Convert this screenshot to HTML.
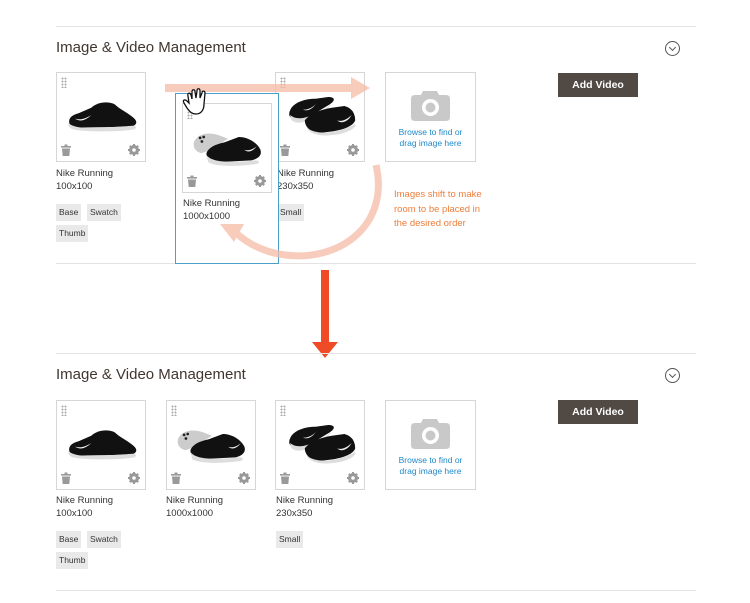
<!DOCTYPE html>
<html><head><meta charset="utf-8"><style>
*{margin:0;padding:0;box-sizing:border-box}
body{width:750px;height:603px;background:#fff;position:relative;overflow:hidden;font-family:"Liberation Sans",sans-serif;color:#333}
.a{position:absolute}
.hr{position:absolute;left:56px;width:640px;height:1px;background:#e3e3e3}
.title{position:absolute;left:56px;font-size:15px;color:#41362f}
.chev{position:absolute;left:665px;width:15px;height:15px;border:1px solid #555;border-radius:50%}
.chev:after{content:"";position:absolute;left:4px;top:2.5px;width:4px;height:4px;border-right:1px solid #555;border-bottom:1px solid #555;transform:rotate(45deg)}
.card{position:absolute;width:90px;height:90px;border:1px solid #d6d6d6;background:#fff}
.card svg.shoe{position:absolute;left:9px;top:20px}
.dots{position:absolute;left:4px;top:4px;width:6px;height:11px;background:radial-gradient(circle,#aaa 0.9px,transparent 1.1px) 0 0/3px 3px}
.trash{position:absolute;left:4px;bottom:5px}
.gear{position:absolute;right:5px;bottom:5px}
.lbl{position:absolute;font-size:9.5px;line-height:13px;color:#333}
.tag{position:absolute;height:17px;background:#e9e9e9;font-size:8.5px;line-height:17px;padding:0 3px;color:#333}
.btn{position:absolute;left:558px;width:80px;height:24px;background:#514943;color:#fff;font-size:10.5px;font-weight:bold;text-align:center;line-height:24px}
.up{position:absolute;width:91px;height:90px;border:1px solid #d6d6d6}
.up .t{position:absolute;top:54px;width:100%;text-align:center;font-size:8.5px;line-height:10.5px;color:#1f87c9}
</style></head><body>
<svg width="0" height="0" style="position:absolute">
<defs>
<g id="s1"><path d="M4 34 C2 28 6 24 14 22 L28 16 C34 10 46 8 54 12 C60 18 70 22 76 28 C80 32 78 36 72 37 L12 38 C8 38 5 37 4 34Z" fill="#111"/><path d="M3 33 C8 38 20 39 40 38 L74 36 C78 36 79 38 76 40 C60 43 20 43 8 40 C4 39 2 36 3 33Z" fill="#ddd"/><path d="M10 28 C16 30 22 28 28 24 C22 30 16 32 10 28Z" fill="#eee"/></g>
<g id="s2"><path d="M2 20 C6 10 18 8 30 12 L40 16 C30 22 20 30 10 32 C4 30 1 26 2 20Z" fill="#ccc"/><circle cx="9" cy="15" r="1.5" fill="#222"/><circle cx="13" cy="14" r="1.5" fill="#222"/><circle cx="11" cy="19" r="1.5" fill="#222"/><path d="M16 32 C18 26 26 22 36 20 L52 14 C62 14 72 20 76 28 C78 34 74 38 66 40 L26 42 C20 42 16 38 16 32Z" fill="#111"/><path d="M16 34 C22 42 40 43 70 40 C75 40 76 42 72 44 C50 47 26 47 18 42Z" fill="#ddd"/><path d="M58 28 C62 30 68 28 72 24 C68 30 62 32 58 28Z" fill="#eee"/></g>
<g id="s3"><path d="M6 18 C10 10 22 6 34 6 L48 4 C56 4 56 8 50 12 L30 24 C22 28 12 30 8 28 C4 26 4 22 6 18Z" fill="#111"/><path d="M6 24 C12 30 26 30 52 12 C48 18 34 28 20 32 C10 34 5 30 6 24Z" fill="#ddd"/><path d="M22 30 C28 22 40 18 52 16 L66 14 C74 16 78 22 78 30 C76 36 66 40 54 42 L38 44 C30 44 22 38 22 30Z" fill="#111"/><path d="M24 38 C34 46 56 46 78 34 C80 38 70 44 56 46 C40 48 28 46 24 38Z" fill="#ddd"/><path d="M58 30 C64 32 70 28 74 24 C70 32 62 34 58 30Z" fill="#eee"/><path d="M20 18 C26 18 30 16 34 12 C30 18 24 20 20 18Z" fill="#eee"/></g>
<g id="tr"><rect x="0" y="2" width="10" height="1.6" fill="#999"/><rect x="3.5" y="0.5" width="3" height="1.5" fill="#999"/><path d="M1 4.5 H9 L8.3 12 H1.7Z" fill="#999"/></g>
<g id="ge"><circle cx="6" cy="6" r="3.8" fill="none" stroke="#999" stroke-width="2.4"/><g stroke="#999" stroke-width="2"><path d="M6 0V12M0 6H12M1.8 1.8L10.2 10.2M10.2 1.8L1.8 10.2"/></g><circle cx="6" cy="6" r="1.8" fill="#fff"/></g>
</defs></svg>

<div class="hr" style="top:26px"></div>
<div class="hr" style="top:263px"></div>
<div class="title" style="top:39px">Image &amp; Video Management</div>
<div class="chev" style="top:41px"></div>

<div class="card" style="left:56px;top:72px"><div class="dots"></div><svg class="shoe" width="72" height="44" viewBox="0 0 80 48"><use href="#s1"/></svg><svg class="trash" width="10" height="12"><use href="#tr"/></svg><svg class="gear" width="12" height="12"><use href="#ge"/></svg></div>
<div class="lbl" style="left:56px;top:167px">Nike Running<br>100x100</div>
<div class="tag" style="left:56px;top:204px">Base</div><div class="tag" style="left:87px;top:204px">Swatch</div><div class="tag" style="left:56px;top:225px">Thumb</div>

<div class="card" style="left:275px;top:72px"><div class="dots"></div><svg class="shoe" width="72" height="44" viewBox="0 0 80 48"><use href="#s3"/></svg><svg class="trash" width="10" height="12"><use href="#tr"/></svg><svg class="gear" width="12" height="12"><use href="#ge"/></svg></div>
<div class="lbl" style="left:277px;top:167px">Nike Running<br>230x350</div>
<div class="tag" style="left:277px;top:204px">Small</div>

<div class="up" style="left:385px;top:72px"><svg class="a" style="left:25px;top:18px" width="39" height="30" viewBox="0 0 39 30"><path d="M12 0H26L28 4H35Q39 4 39 8V26Q39 30 35 30H4Q0 30 0 26V8Q0 4 4 4H10Z" fill="#c9c9c9"/><circle cx="19.5" cy="16.5" r="8.5" fill="#fff"/><circle cx="19.5" cy="16.5" r="5" fill="#c9c9c9"/></svg><div class="t">Browse to find or<br>drag image here</div></div>
<div class="btn" style="top:73px">Add Video</div>

<div class="a" style="left:394px;top:188px;font-size:9.5px;line-height:14.5px;color:#ee7d3b">Images shift to make<br>room to be placed in<br>the desired order</div>

<div class="a" style="left:175px;top:93px;width:104px;height:171px;border:1px solid #4a9fcb;background:#fff"></div>
<div class="card" style="left:182px;top:103px"><div class="dots"></div><svg class="shoe" width="72" height="44" viewBox="0 0 80 48"><use href="#s2"/></svg><svg class="trash" width="10" height="12"><use href="#tr"/></svg><svg class="gear" width="12" height="12"><use href="#ge"/></svg></div>
<div class="lbl" style="left:183px;top:197px">Nike Running<br>1000x1000</div>

<svg class="a" style="left:0;top:0" width="750" height="300">
<g opacity="0.75">
<rect x="165" y="84" width="188" height="8" fill="#f6bba5"/>
<path d="M351 77 L370 88 L351 99Z" fill="#f6bba5"/>
<path d="M376 165 C390 225 340 262 285 255 C262 252 246 242 236 233" fill="none" stroke="#f6bba5" stroke-width="7"/>
<path d="M220 224 L244 224 L234 242Z" fill="#f6bba5"/>
</g>
<path d="M189 103 L188 96 C187 93 190 92 191 95 L192 99 L192 92 C192 89 195 89 195 92 L196 98 L197 91 C197 88 200 88 200 91 L200 98 L202 93 C202 90 205 91 205 93 L204 104 C204 110 201 114 196 114 C192 114 190 112 187 108 L184 103 C182 100 185 99 187 101Z" fill="#fff" stroke="#111" stroke-width="1.3"/>
</svg>

<svg class="a" style="left:310px;top:270px" width="30" height="90"><rect x="11" y="0" width="8" height="72" fill="#ef4b27"/><path d="M2 72 H28 L15 88Z" fill="#ef4b27"/></svg>

<div class="hr" style="top:353px"></div>
<div class="title" style="top:366px">Image &amp; Video Management</div>
<div class="chev" style="top:368px"></div>

<div class="card" style="left:56px;top:400px"><div class="dots"></div><svg class="shoe" width="72" height="44" viewBox="0 0 80 48"><use href="#s1"/></svg><svg class="trash" width="10" height="12"><use href="#tr"/></svg><svg class="gear" width="12" height="12"><use href="#ge"/></svg></div>
<div class="lbl" style="left:56px;top:494px">Nike Running<br>100x100</div>
<div class="tag" style="left:56px;top:531px">Base</div><div class="tag" style="left:87px;top:531px">Swatch</div><div class="tag" style="left:56px;top:552px">Thumb</div>

<div class="card" style="left:166px;top:400px"><div class="dots"></div><svg class="shoe" width="72" height="44" viewBox="0 0 80 48"><use href="#s2"/></svg><svg class="trash" width="10" height="12"><use href="#tr"/></svg><svg class="gear" width="12" height="12"><use href="#ge"/></svg></div>
<div class="lbl" style="left:166px;top:494px">Nike Running<br>1000x1000</div>

<div class="card" style="left:275px;top:400px"><div class="dots"></div><svg class="shoe" width="72" height="44" viewBox="0 0 80 48"><use href="#s3"/></svg><svg class="trash" width="10" height="12"><use href="#tr"/></svg><svg class="gear" width="12" height="12"><use href="#ge"/></svg></div>
<div class="lbl" style="left:276px;top:494px">Nike Running<br>230x350</div>
<div class="tag" style="left:276px;top:531px">Small</div>

<div class="up" style="left:385px;top:400px"><svg class="a" style="left:25px;top:18px" width="39" height="30" viewBox="0 0 39 30"><path d="M12 0H26L28 4H35Q39 4 39 8V26Q39 30 35 30H4Q0 30 0 26V8Q0 4 4 4H10Z" fill="#c9c9c9"/><circle cx="19.5" cy="16.5" r="8.5" fill="#fff"/><circle cx="19.5" cy="16.5" r="5" fill="#c9c9c9"/></svg><div class="t">Browse to find or<br>drag image here</div></div>
<div class="btn" style="top:400px">Add Video</div>

<div class="hr" style="top:590px"></div>
</body></html>
